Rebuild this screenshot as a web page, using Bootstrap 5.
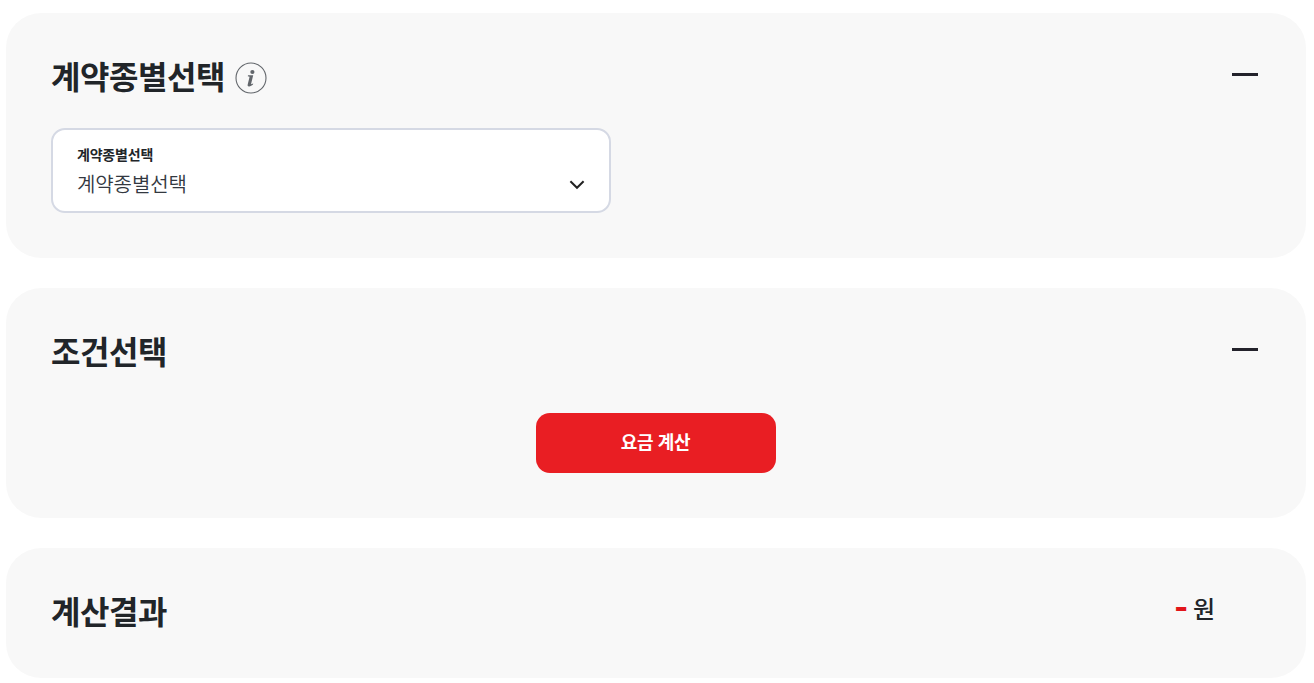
<!DOCTYPE html>
<html lang="ko">
<head>
<meta charset="utf-8">
<meta name="viewport" content="width=device-width, initial-scale=1">
<title>요금 계산</title>
<link href="https://cdn.jsdelivr.net/npm/bootstrap@5.3.0/dist/css/bootstrap.min.css" rel="stylesheet">
<style>
body{font-family:"Noto Sans CJK KR",sans-serif;color:#212529;overflow:hidden}
.calc-list{padding:13px 8px 0 6px;gap:30px}
.calc-panel{background:#f8f8f8;border-radius:35px;padding:41px 48px 0 45px}
.panel-type{height:245px}.panel-cond{height:230px}.panel-result{height:130px}
.panel-head{height:44px}
.panel-title{font-size:32px;line-height:42px;font-weight:700;letter-spacing:-.45px}
.info-icon{margin:8px 0 0 10px}
.fold-mark{width:26px;height:3px;margin-top:19px;background:#23222b}
.contract-box{width:560px;height:85px;margin-top:30px;padding:13px 24px 0;border:2px solid #d5d9e4;border-radius:14px}
.contract-label{font-size:14px;line-height:22px;font-weight:700;letter-spacing:-.2px}
.contract-value{font-size:20px;line-height:30px;font-weight:350;letter-spacing:-.1px;margin-top:4px;color:#333840}
.chevron{margin-top:35px}
.btn-calc,.btn-calc:hover{width:240px;height:60px;padding:0 1px 4px 0;background:#e91e23;color:#fff;border:0;border-radius:14px;font-size:18px;font-weight:700;letter-spacing:-.35px;margin:40px 0 0 3px}
.won{font-size:24px;line-height:36px;font-weight:500;gap:5px;margin:1px 43px 0 0}
.won-amount{font-size:37px;line-height:34px;font-weight:700;color:#e2151a}
</style>
</head>
<body>
<main class="calc-list d-flex flex-column">
<section class="calc-panel panel-type">
<div class="panel-head d-flex justify-content-between">
<div class="d-flex"><h2 class="panel-title m-0">계약종별선택</h2>
<svg class="info-icon" width="32" height="32" viewBox="0 0 32 32" aria-hidden="true"><circle cx="16" cy="16" r="15" fill="none" stroke="#62666b" stroke-width="1.1"/><circle cx="17.4" cy="10" r="2.1" fill="#62666b"/><path d="M13 13.3h5.200l-2.200 9 2.200-.9-.2 1.200c-1.300 1.300-2.800 1.900-4.100 1.800-1-.1-1.500-.9-1.200-2l1.900-7.600-1.800-.5z" fill="#62666b"/></svg></div>
<div class="fold-mark"></div>
</div>
<div class="contract-box bg-white d-flex justify-content-between"><div><div class="contract-label">계약종별선택</div><div class="contract-value">계약종별선택</div></div>
<svg class="chevron" width="16" height="16" viewBox="0 0 16 16" aria-hidden="true"><path d="M1.4 3.2L8 9.8l6.600-6.600" fill="none" stroke="#222" stroke-width="2"/></svg></div>
</section>
<section class="calc-panel panel-cond"><div class="panel-head d-flex justify-content-between"><h2 class="panel-title m-0">조건선택</h2><div class="fold-mark"></div></div>
<div class="d-flex justify-content-center"><button type="button" class="btn btn-calc">요금 계산</button></div></section>
<section class="calc-panel panel-result"><div class="panel-head d-flex justify-content-between"><h2 class="panel-title m-0">계산결과</h2><div class="won d-flex"><span class="won-amount">-</span><span>원</span></div></div></section>
</main>
<script src="https://cdn.jsdelivr.net/npm/bootstrap@5.3.0/dist/js/bootstrap.bundle.min.js"></script>
</body>
</html>
